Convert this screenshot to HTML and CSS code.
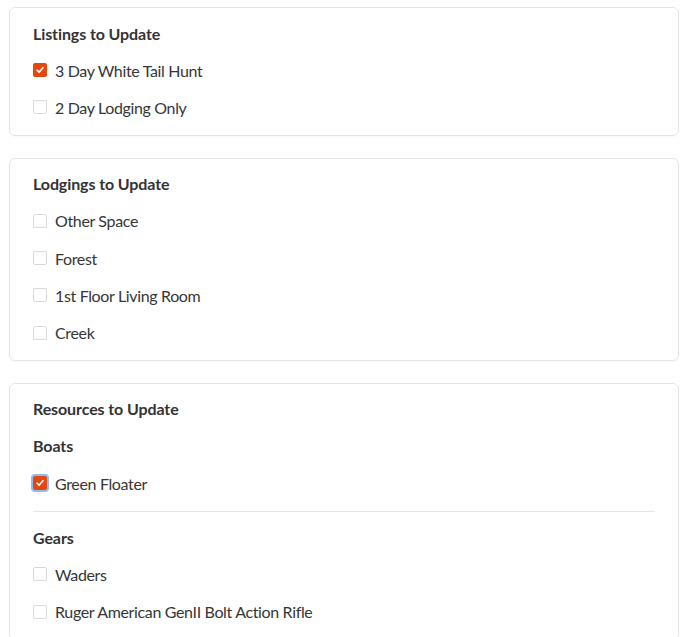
FILE: index.html
```html
<!DOCTYPE html>
<html>
<head>
<meta charset="utf-8">
<link rel="stylesheet" href="styles.css">
</head>
<body>
<div class="page">
  <section class="card">
    <h3 class="card-title">Listings to Update</h3>
    <label class="row"><span class="box checked"><svg viewBox="0 0 14 14"><path d="M3.6 7.3 L5.9 9.6 L10.4 4.4" /></svg></span><span class="label">3 Day White Tail Hunt</span></label>
    <label class="row"><span class="box"></span><span class="label">2 Day Lodging Only</span></label>
  </section>
  <section class="card">
    <h3 class="card-title">Lodgings to Update</h3>
    <label class="row"><span class="box"></span><span class="label">Other Space</span></label>
    <label class="row"><span class="box"></span><span class="label">Forest</span></label>
    <label class="row"><span class="box"></span><span class="label">1st Floor Living Room</span></label>
    <label class="row"><span class="box"></span><span class="label">Creek</span></label>
  </section>
  <section class="card">
    <h3 class="card-title">Resources to Update</h3>
    <h4 class="group-title">Boats</h4>
    <label class="row"><span class="box checked focused"><svg viewBox="0 0 14 14"><path d="M3.6 7.3 L5.9 9.6 L10.4 4.4" /></svg></span><span class="label">Green Floater</span></label>
    <hr class="divider">
    <h4 class="group-title">Gears</h4>
    <label class="row"><span class="box"></span><span class="label">Waders</span></label>
    <label class="row"><span class="box"></span><span class="label">Ruger American GenII Bolt Action Rifle</span></label>
  </section>
</div>
</body>
</html>
```
FILE: styles.css
```css
html, body {
  margin: 0;
  padding: 0;
  background: #ffffff;
}
body {
  font-family: Lato, "Open Sans", "Liberation Sans", sans-serif;
  color: #363636;
  font-size: 16px;
}
.page {
  padding: 7px 9px 0 9px;
  display: flex;
  flex-direction: column;
  gap: 22px;
}
.card {
  border: 1px solid #e4e4e4;
  border-radius: 6px;
  padding: 6.5px 23px 8.5px 23px;
  box-shadow: 0 1px 2px rgba(0,0,0,0.03);
}
.card-title, .group-title {
  margin: 0;
  height: 37px;
  line-height: 37px;
  font-size: 16px;
  font-weight: 700;
  color: #333333;
  letter-spacing: -0.1px;
}
.row {
  display: flex;
  align-items: center;
  height: 37.33px;
  gap: 8px;
}
.box {
  width: 14px;
  height: 14px;
  flex: none;
  box-sizing: border-box;
  border: 1px solid #d9d9d9;
  border-radius: 2px;
  background: #fff;
  display: flex;
  align-items: center;
  justify-content: center;
}
.box svg {
  width: 14px;
  height: 14px;
  display: none;
}
.box.checked {
  background: #e4480f;
  border-color: #e4480f;
}
.box.checked svg {
  display: block;
}
.box svg path {
  fill: none;
  stroke: #ffffff;
  stroke-width: 2;
  stroke-linecap: round;
  stroke-linejoin: round;
}
.box.focused {
  box-shadow: 0 0 0 2px #8fbdf2;
}
.label {
  color: #363636;
  letter-spacing: -0.35px;
}
.divider {
  border: 0;
  border-top: 1px solid #e6e6e6;
  margin: 9px 0 7px 0;
}
```
